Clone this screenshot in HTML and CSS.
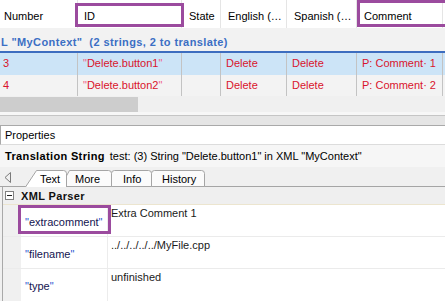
FILE: index.html
```html
<!DOCTYPE html>
<html>
<head>
<meta charset="utf-8">
<link rel="stylesheet" href="styles.css">
</head>
<body>
<div class="app">
  <div class="head">
    <div class="hc c-num">Number</div>
    <div class="hc c-id">ID</div>
    <div class="hc c-state">State</div>
    <div class="hc c-en">English (…</div>
    <div class="hc c-es">Spanish (…</div>
    <div class="hc c-cm">Comment</div>
    <div class="hl hl-id"></div>
    <div class="hl hl-cm"></div>
  </div>
  <div class="ctx">L "MyContext"&nbsp;&nbsp;(2 strings, 2 to translate)</div>
  <div class="rows">
    <div class="row sel">
      <div class="cell c-num">3</div>
      <div class="cell c-id"><span class="qr">"</span>Delete.button1<span class="qr">"</span></div>
      <div class="cell c-state"></div>
      <div class="cell c-en">Delete</div>
      <div class="cell c-es">Delete</div>
      <div class="cell c-cm">P: Comment· 1</div>
    </div>
    <div class="row alt">
      <div class="cell c-num">4</div>
      <div class="cell c-id"><span class="qr">"</span>Delete.button2<span class="qr">"</span></div>
      <div class="cell c-state"></div>
      <div class="cell c-en">Delete</div>
      <div class="cell c-es">Delete</div>
      <div class="cell c-cm">P: Comment· 2</div>
    </div>
  </div>
  <div class="hscroll"><div class="thumb"></div></div>
  <div class="gapline"></div>
  <div class="splitter"></div>
  <div class="props">
    <div class="props-title">Properties</div>
    <div class="trans"><b>Translation String</b><span class="tdesc">test: (3) String "Delete.button1" in XML "MyContext"</span></div>
    <div class="tabs">
      <span class="arrow"><svg width="8" height="11" viewBox="0 0 8 11"><path d="M6.5,0.5 L1,5.5 L6.5,10.5 Z" fill="none" stroke="#7a7a7a" stroke-width="1"/></svg></span>
      <span class="tab t-text act"><svg class="tabshape" width="42" height="17" viewBox="0 0 42 17"><path d="M0.5,17 L11.5,0.5 H38.5 Q41.5,0.5 41.5,3.5 V17" fill="#ffffff" stroke="#a5a5a5"/></svg><span class="lbl">Text</span></span>
      <span class="tab t-more"><svg class="tabshape" width="52" height="17" viewBox="0 0 52 17"><path d="M0.5,16.5 L9.5,0.5 H48.5 Q51.5,0.5 51.5,3.5 V16.5 Z" fill="#fbfbfb" stroke="#a5a5a5"/></svg><span class="lbl">More</span></span>
      <span class="tab t-info"><svg class="tabshape" width="41" height="17" viewBox="0 0 41 17"><path d="M0.5,16.5 V3.5 Q0.5,0.5 3.5,0.5 H37.5 Q40.5,0.5 40.5,3.5 V16.5 Z" fill="#fbfbfb" stroke="#a5a5a5"/></svg><span class="lbl">Info</span></span>
      <span class="tab t-hist"><svg class="tabshape" width="54" height="17" viewBox="0 0 54 17"><path d="M0.5,16.5 V3.5 Q0.5,0.5 3.5,0.5 H50.5 Q53.5,0.5 53.5,3.5 V16.5 Z" fill="#fbfbfb" stroke="#a5a5a5"/></svg><span class="lbl">History</span></span>
    </div>
    <div class="pgrid">
      <div class="grp"><span class="minus"></span><b>XML Parser</b></div>
      <div class="prow">
        <div class="gut"></div>
        <div class="pname"><span class="qb">"</span>extracomment<span class="qb">"</span></div>
        <div class="pval">Extra Comment 1</div>
      </div>
      <div class="prow">
        <div class="gut"></div>
        <div class="pname"><span class="qb">"</span>filename<span class="qb">"</span></div>
        <div class="pval">../../../../../MyFile.cpp</div>
      </div>
      <div class="prow last">
        <div class="gut"></div>
        <div class="pname"><span class="qb">"</span>type<span class="qb">"</span></div>
        <div class="pval">unfinished</div>
      </div>
      <div class="hl hl-name"></div>
    </div>
  </div>
</div>
</body>
</html>
```

FILE: styles.css
```css
* { box-sizing: border-box; }
html, body { margin: 0; padding: 0; }
body {
  width: 445px;
  height: 301px;
  overflow: hidden;
  background: #f0f0f0;
  font-family: "Liberation Sans", Arial, sans-serif;
  font-size: 11px;
  color: #000;
}
.app { width: 445px; height: 301px; display: flex; flex-direction: column; overflow: hidden; }

/* header */
.head {
  position: relative;
  height: 28px;
  flex: none;
  display: flex;
  background: #ffffff;
}
.hc {
  padding-top: 4px;
  line-height: 24px;
  white-space: nowrap;
  overflow: hidden;
  border-right: 1px solid #e5e5e5;
  padding-left: 7px;
}
.c-num { width: 78px; padding-left: 4px; }
.c-id { width: 104px; padding-left: 6px; }
.c-state { width: 39px; }
.c-en { width: 66px; }
.c-es { width: 70px; }
.c-cm { width: 86px; }
.hl {
  position: absolute;
  border: 3px solid #9b4b9e;
}
.hl-id { left: 75px; top: 3px; width: 109px; height: 24px; }
.hl-cm { left: 357px; top: 0; width: 100px; height: 27px; }

/* context bar */
.ctx {
  flex: none;
  height: 25px;
  padding-top: 5px;
  padding-left: 1px;
  line-height: 18px;
  font-weight: bold;
  letter-spacing: 0.4px;
  color: #3b6fc4;
  white-space: nowrap;
  background: #f2f2f2;
  border-bottom: 2px solid #3d6dbf;
}

/* rows */
.rows { flex: none; }
.row { display: flex; height: 21px; background: #f3f3f3; color: #d9142c; }
.row.sel { height: 22px; background: #cce4f7; }
.cell {
  border-right: 1px solid #c3c3c3;
  padding-left: 5px;
  line-height: 21px;
  white-space: nowrap;
  overflow: hidden;
}
.cell.c-num { padding-left: 3px; }
.row .c-cm { width: 86px; }
.qr { color: #f0608a; }

/* scrollbar */
.hscroll { flex: none; height: 16px; background: #f0f0f0; padding-top: 1px; }
.thumb { width: 138px; height: 15px; background: #cdcdcd; }
.gapline { flex: none; height: 4px; background: #f7f7f7; border-bottom: 1px solid #c5c5c5; }
.splitter { flex: none; height: 10px; background: #e5e5e5; border-bottom: 1px solid #a9a9a9; }

/* properties */
.props { flex: 1; display: flex; flex-direction: column; min-height: 0; }
.props-title {
  flex: none;
  height: 19px;
  line-height: 18px;
  padding-left: 4px;
  background: #ffffff;
  border-left: 1px solid #a9a9a9;
  border-bottom: 1px solid #dcdcdc;
}
.trans {
  flex: none;
  height: 22px;
  line-height: 22px;
  padding-left: 5px;
  background: #f6f6f6;
  white-space: nowrap;
}
.trans b { font-weight: bold; letter-spacing: 0.35px; }
.tdesc { margin-left: 5px; }

/* tabs */
.tabs {
  flex: none;
  height: 20px;
  display: flex;
  align-items: flex-end;
  background: #f0f0f0;
  border-bottom: 1px solid #a5a5a5;
}
.arrow { width: 25px; height: 20px; padding: 6px 0 0 4px; }
.arrow svg { display: block; }
.tab {
  position: relative;
  height: 17px;
  display: flex;
  align-items: center;
  margin-bottom: -1px;
}
.tabshape { position: absolute; left: 0; top: 0; }
.lbl { position: relative; line-height: 16px; padding-top: 1px; }
.t-text { width: 42px; padding-left: 15px; z-index: 3; }
.t-more { width: 52px; margin-left: -7px; padding-left: 15px; z-index: 2; }
.t-info { width: 41px; margin-left: -1px; padding-left: 12px; z-index: 1; }
.t-hist { width: 54px; margin-left: -1px; padding-left: 11px; }

/* property grid */
.pgrid {
  position: relative;
  flex: 1;
  margin-left: 2px;
  border-left: 1px solid #a9a9a9;
  background: #ffffff;
}
.grp {
  height: 18px;
  display: flex;
  align-items: center;
  background: #efefef;
  border-bottom: 1px solid #ece5cf;
  padding-left: 2px;
}
.grp b { margin-left: 7px; font-weight: bold; letter-spacing: 0.35px; color: #111; }
.minus {
  position: relative;
  width: 9px;
  height: 9px;
  border: 1px solid #808080;
  background: #fff;
}
.minus::after {
  content: "";
  position: absolute;
  left: 1px; top: 3px;
  width: 5px; height: 1px;
  background: #222;
}
.prow {
  display: flex;
  height: 32px;
  border-bottom: 1px solid #ebebeb;
}
.prow.last { border-bottom: none; }
.gut { width: 18px; background: #f0f0f0; }
.pname {
  width: 87px;
  display: flex;
  align-items: center;
  padding-left: 4px;
  padding-top: 2px;
  border-right: 1px solid #ececec;
  color: #141450;
  white-space: nowrap;
}
.qb { color: #2a55d0; }
.pval {
  flex: 1;
  padding-left: 3px;
  padding-top: 2px;
  line-height: 13px;
  color: #1a1a1a;
  white-space: nowrap;
}
.hl-name { left: 15px; top: 18px; width: 93px; height: 29px; }
```
